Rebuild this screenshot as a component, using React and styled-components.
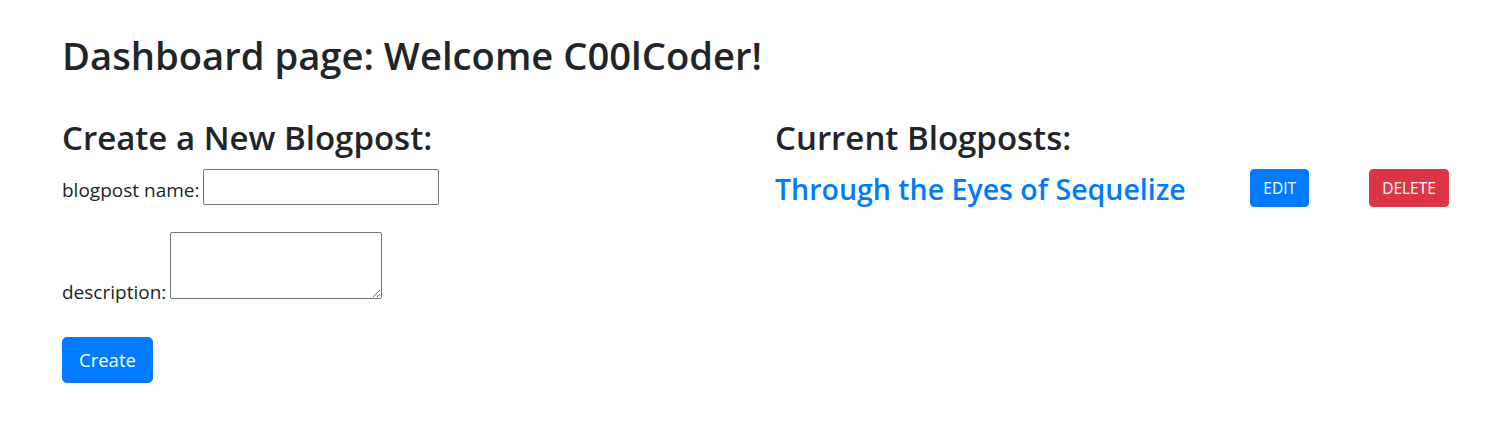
import React from "react";
import styled, { createGlobalStyle } from "styled-components";

const Global = createGlobalStyle`
  html, body { margin: 0; padding: 0; background: #fff; }
  body {
    font-family: "Segoe UI", "Open Sans", "Noto Sans", sans-serif;
    color: #212529;
    font-size: 16px;
    line-height: 1.5;
  }
  * { box-sizing: border-box; }
`;

const Page = styled.div`
  padding: 31px 15px 0 47px;
`;

const Title = styled.h1`
  margin: 0 0 40px 15px;
  font-size: 38.2px;
  font-weight: 600;
  line-height: 48px;
  white-space: nowrap;
`;

const Row = styled.div`
  display: grid;
  grid-template-columns: minmax(0, 1fr) minmax(0, 1fr);
`;

const Col = styled.div`
  padding: 0 15px;
`;

const Heading = styled.h2`
  margin: 0;
  font-size: 33px;
  font-weight: 600;
  line-height: 38px;
  white-space: nowrap;
`;

const Field = styled.div`
  display: flex;
  align-items: flex-end;
  gap: 4px;
  margin-top: ${(p) => p.$mt}px;
`;

const Label = styled.label`
  font-size: 19px;
  line-height: 24px;
  margin-bottom: ${(p) => p.$mb}px;
  white-space: nowrap;
`;

const Input = styled.input`
  width: 236px;
  height: 36px;
  border: 1px solid #767676;
  border-radius: 2px;
  padding: 0 4px;
  font: inherit;
`;

const Area = styled.textarea`
  width: 212px;
  height: 67px;
  border: 1px solid #767676;
  border-radius: 2px;
  padding: 2px;
  font: inherit;
  resize: both;
`;

const Button = styled.button`
  display: inline-block;
  border: 1px solid ${(p) => (p.$danger ? "#dc3545" : "#007bff")};
  background: ${(p) => (p.$danger ? "#dc3545" : "#007bff")};
  color: #fff;
  font-family: inherit;
  font-size: ${(p) => (p.$lg ? 18.5 : 15.5)}px;
  line-height: ${(p) => (p.$lg ? 28 : 24)}px;
  padding: ${(p) => (p.$lg ? "8px 16px" : "6px 12px")};
  border-radius: ${(p) => (p.$lg ? 4.8 : 4)}px;
  cursor: pointer;
  white-space: nowrap;
`;

const CreateWrap = styled.div`
  margin-top: 38px;
`;

const PostRow = styled.div`
  display: grid;
  grid-template-columns: minmax(0, 8fr) minmax(0, 2fr) minmax(0, 2fr);
  margin: 12px -15px 0;
  align-items: start;
`;

const PostCell = styled.div`
  padding: 0 15px;
`;

const PostLink = styled.a`
  display: block;
  color: #007bff;
  text-decoration: none;
  font-size: 28.5px;
  font-weight: 600;
  line-height: 40px;
  white-space: nowrap;
`;

export default function App() {
  return (
    <>
      <Global />
      <Page>
        <Title>Dashboard page: Welcome C00lCoder!</Title>
        <Row>
          <Col>
            <Heading>Create a New Blogpost:</Heading>
            <Field $mt={12}>
              <Label $mb={3}>blogpost name:</Label>
              <Input type="text" />
            </Field>
            <Field $mt={27}>
              <Label $mb={-5}>description:</Label>
              <Area />
            </Field>
            <CreateWrap>
              <Button $lg>Create</Button>
            </CreateWrap>
          </Col>
          <Col>
            <Heading>Current Blogposts:</Heading>
            <PostRow>
              <PostCell>
                <PostLink href="#">Through the Eyes of Sequelize</PostLink>
              </PostCell>
              <PostCell>
                <Button>EDIT</Button>
              </PostCell>
              <PostCell>
                <Button $danger>DELETE</Button>
              </PostCell>
            </PostRow>
          </Col>
        </Row>
      </Page>
    </>
  );
}
